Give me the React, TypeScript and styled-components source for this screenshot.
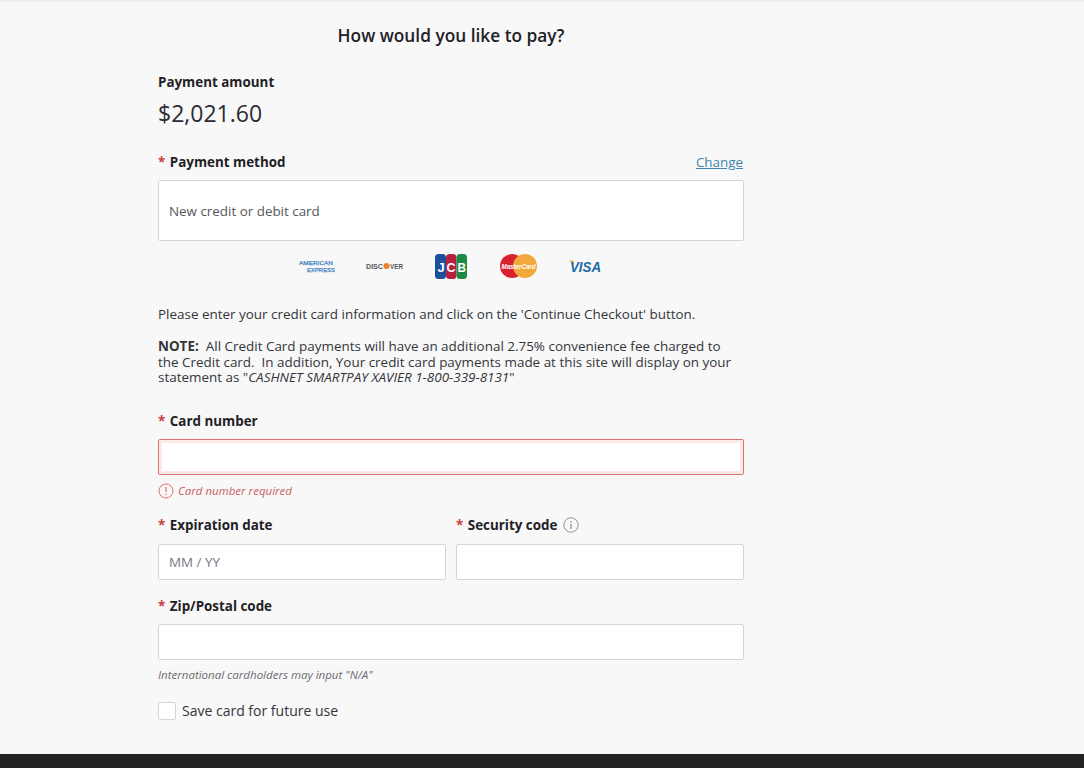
import React from 'react';
import styled, { createGlobalStyle } from 'styled-components';

const GlobalStyle = createGlobalStyle`
  html, body {
    margin: 0;
    padding: 0;
    background: #f8f8f8;
  }
  * {
    box-sizing: border-box;
  }
`;

const Page = styled.div`
  height: 768px;
  overflow: hidden;
  display: flex;
  flex-direction: column;
  border-top: 2px solid #ececec;
  background: #f8f8f8;
  font-family: 'Open Sans', 'Liberation Sans', sans-serif;
  color: #24262b;
`;

const Main = styled.main`
  flex: 1;
  width: 586px;
  margin-left: 158px;
`;

const Footer = styled.footer`
  height: 14px;
  background: #222222;
`;

const Heading = styled.h1`
  margin: 22px 0 0;
  font-size: 17.3px;
  line-height: 24px;
  font-weight: 600;
  text-align: center;
  color: #1f2126;
`;

const Label = styled.label`
  display: block;
  font-size: 13.4px;
  line-height: 18px;
  font-weight: 700;
  color: #1f2126;
`;

const Star = styled.span`
  color: #c8423f;
  margin-right: 4.5px;
`;

const AmountLabel = styled(Label)`
  margin-top: 25px;
`;

const Amount = styled.div`
  margin-top: 7px;
  font-size: 23px;
  line-height: 30px;
  color: #2b2d32;
`;

const MethodRow = styled.div`
  margin-top: 25px;
  display: flex;
  justify-content: space-between;
  align-items: center;
  height: 18px;
`;

const ChangeLink = styled.a`
  font-size: 13.4px;
  margin-right: 1px;
  color: #3f84ad;
  text-decoration: underline;
`;

const MethodBox = styled.div`
  margin-top: 9px;
  height: 61px;
  display: flex;
  align-items: center;
  padding-left: 10px;
  background: #ffffff;
  border: 1px solid #d6d6d6;
  border-radius: 2px;
  font-size: 13.4px;
  color: #55575c;
`;

const LogoRow = styled.div`
  margin-top: 12px;
  margin-left: 141px;
  display: flex;
  align-items: center;
  height: 26px;
`;

const Logo = styled.svg<{ $gap: number }>`
  display: block;
  margin-right: ${({ $gap }) => $gap}px;
  flex: none;
  overflow: visible;
`;

const Intro = styled.p`
  margin: 25px 0 0;
  font-size: 13.45px;
  line-height: 20px;
  color: #33353a;
`;

const Note = styled.p`
  margin: 15px 0 0;
  width: 578px;
  font-size: 13.45px;
  line-height: 15.5px;
  color: #33353a;

  b {
    font-weight: 700;
  }
  i {
    font-style: italic;
  }
`;

const FieldLabel = styled(Label)<{ $top: number }>`
  margin-top: ${({ $top }) => $top}px;
  display: flex;
  align-items: center;
`;

const Input = styled.input<{ $invalid?: boolean }>`
  display: block;
  width: 100%;
  height: 36px;
  margin-top: 9px;
  padding: 0 10px;
  background: #ffffff;
  border: 1px solid ${({ $invalid }) => ($invalid ? '#d9736f' : '#d6d6d6')};
  border-radius: 2px;
  box-shadow: ${({ $invalid }) => ($invalid ? 'inset 0 0 0 3px #fbe9e8' : 'none')};
  font-family: inherit;
  font-size: 13.4px;
  color: #33353a;
  outline: none;

  &::placeholder {
    color: #77797e;
    opacity: 1;
  }
`;

const ErrorRow = styled.div`
  margin-top: 8px;
  height: 16px;
  display: flex;
  align-items: center;
  gap: 4px;
  font-size: 11.5px;
  font-style: italic;
  color: #c8605d;
`;

const TwoCols = styled.div`
  display: grid;
  grid-template-columns: 288px 288px;
  gap: 10px;

  ${Input} {
    margin-top: 10px;
  }
`;

const InfoIcon = styled.svg`
  margin-left: 6px;
`;

const Hint = styled.div`
  margin-top: 7px;
  font-size: 11.5px;
  line-height: 16px;
  font-style: italic;
  color: #6a6c70;
`;

const CheckRow = styled.label`
  margin-top: 19px;
  display: flex;
  align-items: center;
  gap: 6px;
  font-size: 14px;
  line-height: 18px;
  color: #33353a;
`;

const CheckBox = styled.span`
  width: 18px;
  height: 18px;
  background: #ffffff;
  border: 1px solid #d6d6d6;
  border-radius: 2px;
`;

const logoFont = "'Liberation Sans', sans-serif";

const AmexLogo = () => (
  <Logo $gap={30} width={37} height={16} viewBox="0 0 37 16">
    <text x="0" y="7" fontFamily={logoFont} fontSize="6" fill="#3f7fc4" stroke="#3f7fc4" strokeWidth="0.25" textLength="34" lengthAdjust="spacingAndGlyphs">AMERICAN</text>
    <text x="8" y="14" fontFamily={logoFont} fontSize="6" fill="#3f7fc4" stroke="#3f7fc4" strokeWidth="0.25" textLength="28" lengthAdjust="spacingAndGlyphs">EXPRESS</text>
  </Logo>
);

const DiscoverLogo = () => (
  <Logo $gap={32} width={37} height={12} viewBox="0 0 37 12">
    <text x="0" y="9" fontFamily={logoFont} fontSize="8" fontWeight="700" fill="#55575a" textLength="17" lengthAdjust="spacingAndGlyphs">DISC</text>
    <circle cx="20.5" cy="6" r="3" fill="#ee7f2d" />
    <text x="24" y="9" fontFamily={logoFont} fontSize="8" fontWeight="700" fill="#55575a" textLength="13" lengthAdjust="spacingAndGlyphs">VER</text>
  </Logo>
);

const JcbLogo = () => (
  <Logo $gap={33} width={32} height={25} viewBox="0 0 32 25">
    <rect x="0" y="0" width="11" height="25" rx="3.5" fill="#1c4f9c" />
    <rect x="11" y="0" width="10.5" height="25" rx="3.5" fill="#b5213f" />
    <rect x="21.5" y="0" width="10.5" height="25" rx="3.5" fill="#1f8a45" />
    <text x="2.5" y="17.5" fontFamily={logoFont} fontSize="13" fontWeight="700" fill="#ffffff">J</text>
    <text x="11.5" y="17.5" fontFamily={logoFont} fontSize="13" fontWeight="700" fill="#ffffff" textLength="9" lengthAdjust="spacingAndGlyphs">C</text>
    <text x="22.5" y="17.5" fontFamily={logoFont} fontSize="13" fontWeight="700" fill="#ffffff" textLength="8.5" lengthAdjust="spacingAndGlyphs">B</text>
  </Logo>
);

const MasterCardLogo = () => (
  <Logo $gap={32} width={37} height={24} viewBox="0 0 37 24">
    <circle cx="12" cy="12" r="12" fill="#d8232f" />
    <circle cx="25" cy="12" r="12" fill="#f2a93b" />
    <text x="1.5" y="14.5" fontFamily={logoFont} fontSize="7.5" fontStyle="italic" fontWeight="700" fill="#ffffff" textLength="34" lengthAdjust="spacingAndGlyphs">MasterCard</text>
  </Logo>
);

const VisaLogo = () => (
  <Logo $gap={0} width={33} height={14} viewBox="0 0 33 14">
    <path d="M0 1.5 L4 1.5 L5.5 6 Z" fill="#f2a93b" />
    <text x="1" y="13" fontFamily={logoFont} fontSize="14" fontStyle="italic" fontWeight="700" fill="#1c6ba8" textLength="31" lengthAdjust="spacingAndGlyphs">VISA</text>
  </Logo>
);

export default function App() {
  return (
    <>
      <GlobalStyle />
      <Page>
        <Main>
          <Heading>How would you like to pay?</Heading>

          <AmountLabel as="div">Payment amount</AmountLabel>
          <Amount>$2,021.60</Amount>

          <MethodRow>
            <Label as="div"><Star>*</Star>Payment method</Label>
            <ChangeLink href="#">Change</ChangeLink>
          </MethodRow>
          <MethodBox>New credit or debit card</MethodBox>

          <LogoRow>
            <AmexLogo />
            <DiscoverLogo />
            <JcbLogo />
            <MasterCardLogo />
            <VisaLogo />
          </LogoRow>

          <Intro>Please enter your credit card information and click on the 'Continue Checkout' button.</Intro>
          <Note>
            <b>NOTE:</b>&nbsp; All Credit Card payments will have an additional 2.75% convenience fee charged to
            the Credit card.&nbsp; In addition, Your credit card payments made at this site will display on your
            statement as "<i>CASHNET SMARTPAY XAVIER 1-800-339-8131</i>"
          </Note>

          <FieldLabel $top={26}><Star>*</Star>Card number</FieldLabel>
          <Input $invalid />
          <ErrorRow>
            <svg width="16" height="16" viewBox="0 0 16 16" fill="none" stroke="#d9736f">
              <circle cx="8" cy="8" r="7" />
              <path d="M8 4v5M8 10.8v1.2" strokeWidth="1.2" />
            </svg>
            Card number required
          </ErrorRow>

          <TwoCols>
            <div>
              <FieldLabel $top={17}><Star>*</Star>Expiration date</FieldLabel>
              <Input placeholder="MM / YY" />
            </div>
            <div>
              <FieldLabel $top={17}>
                <Star>*</Star>Security code
                <InfoIcon width="16" height="16" viewBox="0 0 16 16" fill="none" stroke="#8f9194">
                  <circle cx="8" cy="8" r="7.2" />
                  <path d="M8 7v5M8 4v1.4" strokeWidth="1.3" />
                </InfoIcon>
              </FieldLabel>
              <Input />
            </div>
          </TwoCols>

          <FieldLabel $top={17}><Star>*</Star>Zip/Postal code</FieldLabel>
          <Input />
          <Hint>International cardholders may input "N/A"</Hint>

          <CheckRow>
            <CheckBox />
            Save card for future use
          </CheckRow>
        </Main>
        <Footer />
      </Page>
    </>
  );
}
